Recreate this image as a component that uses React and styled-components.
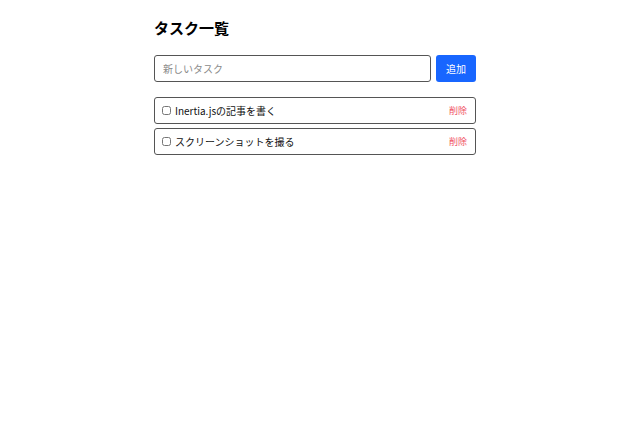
import React, { useState } from 'react';
import styled, { createGlobalStyle } from 'styled-components';

const GlobalStyle = createGlobalStyle`
  body {
    margin: 0;
    background: #ffffff;
    font-family: 'Noto Sans CJK JP', 'Noto Sans', sans-serif;
    color: #111;
  }
`;

const Page = styled.div`
  width: 322px;
  margin: 0 auto;
  padding-top: 15px;
`;

const Title = styled.h1`
  margin: 0 0 14px;
  font-size: 15px;
  line-height: 26px;
  font-weight: 700;
  color: #000;
`;

const Form = styled.form`
  display: flex;
  gap: 5px;
  margin-bottom: 15px;
`;

const Input = styled.input`
  flex: 1;
  height: 27px;
  box-sizing: border-box;
  border: 1px solid #555;
  border-radius: 3px;
  padding: 0 8px;
  font-family: inherit;
  font-size: 10px;
  color: #111;
  outline: none;

  &::placeholder {
    color: #8a8a8a;
  }
`;

const AddButton = styled.button`
  width: 40px;
  height: 27px;
  border: none;
  border-radius: 3px;
  background: #1866ff;
  color: #fff;
  font-family: inherit;
  font-size: 10px;
  padding: 0;
  cursor: pointer;
`;

const List = styled.ul`
  list-style: none;
  margin: 0;
  padding: 0;
  display: flex;
  flex-direction: column;
  gap: 4px;
`;

const Item = styled.li`
  display: flex;
  align-items: center;
  height: 27px;
  box-sizing: border-box;
  border: 1px solid #555;
  border-radius: 3px;
  padding: 0 8px 0 7px;
`;

const Check = styled.input`
  width: 9px;
  height: 9px;
  margin: 0 4px 0 0;
`;

const Label = styled.span`
  flex: 1;
  font-size: 10px;
  color: ${(p) => (p.$done ? '#999' : '#111')};
  text-decoration: ${(p) => (p.$done ? 'line-through' : 'none')};
`;

const DeleteButton = styled.button`
  border: none;
  background: none;
  padding: 0;
  font-family: inherit;
  font-size: 9px;
  color: #f0505f;
  cursor: pointer;
`;

export default function App() {
  const [tasks, setTasks] = useState([
    { id: 1, title: 'Inertia.jsの記事を書く', done: false },
    { id: 2, title: 'スクリーンショットを撮る', done: false },
  ]);
  const [text, setText] = useState('');

  const add = (e) => {
    e.preventDefault();
    if (!text.trim()) return;
    setTasks([...tasks, { id: Date.now(), title: text, done: false }]);
    setText('');
  };

  return (
    <Page>
      <GlobalStyle />
      <Title>タスク一覧</Title>
      <Form onSubmit={add}>
        <Input
          placeholder="新しいタスク"
          value={text}
          onChange={(e) => setText(e.target.value)}
        />
        <AddButton type="submit">追加</AddButton>
      </Form>
      <List>
        {tasks.map((t) => (
          <Item key={t.id}>
            <Check
              type="checkbox"
              checked={t.done}
              onChange={() =>
                setTasks(tasks.map((x) => (x.id === t.id ? { ...x, done: !x.done } : x)))
              }
            />
            <Label $done={t.done}>{t.title}</Label>
            <DeleteButton onClick={() => setTasks(tasks.filter((x) => x.id !== t.id))}>
              削除
            </DeleteButton>
          </Item>
        ))}
      </List>
    </Page>
  );
}
